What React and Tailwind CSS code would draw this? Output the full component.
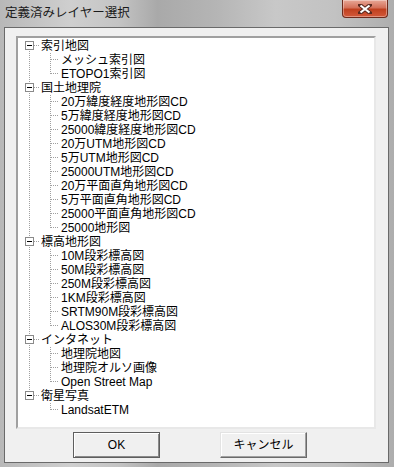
import React from "react";

const tree = [
  { label: "索引地図", children: ["メッシュ索引図", "ETOPO1索引図"] },
  {
    label: "国土地理院",
    children: [
      "20万緯度経度地形図CD",
      "5万緯度経度地形図CD",
      "25000緯度経度地形図CD",
      "20万UTM地形図CD",
      "5万UTM地形図CD",
      "25000UTM地形図CD",
      "20万平面直角地形図CD",
      "5万平面直角地形図CD",
      "25000平面直角地形図CD",
      "25000地形図",
    ],
  },
  {
    label: "標高地形図",
    children: [
      "10M段彩標高図",
      "50M段彩標高図",
      "250M段彩標高図",
      "1KM段彩標高図",
      "SRTM90M段彩標高図",
      "ALOS30M段彩標高図",
    ],
  },
  { label: "インタネット", children: ["地理院地図", "地理院オルソ画像", "Open Street Map"] },
  { label: "衛星写真", children: ["LandsatETM"] },
];

const dot = { stroke: "#a0a0a0", strokeWidth: 1, strokeDasharray: "1 1", shapeRendering: "crispEdges" };

// 親ノードの行（開閉ボックス付き）
function GroupRow({ label, first, last }) {
  return (
    <div className="flex h-[14px] items-center">
      <svg width="23" height="14" className="shrink-0">
        {!first && <line x1="11.5" y1="0" x2="11.5" y2="2" {...dot} />}
        {!last && <line x1="11.5" y1="12" x2="11.5" y2="14" {...dot} />}
        <line x1="16" y1="6.5" x2="22" y2="6.5" {...dot} />
        <rect x="7.5" y="2.5" width="8" height="8" fill="#fff" stroke="#8a8a8a" shapeRendering="crispEdges" />
        <line x1="9" y1="6.5" x2="14" y2="6.5" stroke="#000" shapeRendering="crispEdges" />
      </svg>
      <span className="whitespace-nowrap leading-[14px]">{label}</span>
    </div>
  );
}

// 子ノードの行
function LeafRow({ label, parentLast, last }) {
  return (
    <div className="flex h-[14px] items-center">
      <svg width="43" height="14" className="shrink-0">
        {!parentLast && <line x1="11.5" y1="0" x2="11.5" y2="14" {...dot} />}
        <line x1="32.5" y1="0" x2="32.5" y2={last ? 7 : 14} {...dot} />
        <line x1="33" y1="6.5" x2="41" y2="6.5" {...dot} />
      </svg>
      <span className="whitespace-nowrap leading-[14px]">{label}</span>
    </div>
  );
}

export default function App() {
  return (
    <div className="flex h-[467px] w-[394px] flex-col bg-[linear-gradient(90deg,#b8b8b8_0%,#cfcfcf_18%,#c4c4c4_30%,#a9a9a9_40%,#b5b5b5_55%,#c8c8c8_70%,#c2c2c2_85%,#adadad_100%)] font-['Liberation_Sans','Noto_Sans_CJK_JP',sans-serif] text-[12px] leading-[14px] text-black">
      {/* タイトルバー */}
      <div className="flex h-[27px] shrink-0 items-start justify-between">
        <div className="pl-[5px] pt-[6px] text-[12.5px] leading-[14px] text-[#1a1a1a]">定義済みレイヤー選択</div>
        <div className="mr-[6px] flex h-[18px] w-[46px] items-center justify-center rounded-b-[4px] border border-t-0 border-[#6e2a1c] bg-[linear-gradient(180deg,#e8a897_0%,#d4715a_45%,#c0401f_55%,#d3593a_100%)] shadow-[inset_0_0_0_1px_rgba(255,255,255,0.35)]">
          <svg width="14" height="10" viewBox="0 0 14 10">
            <path d="M2 1 L12 9 M12 1 L2 9" stroke="#5a2a20" strokeWidth="4" strokeLinecap="square" />
            <path d="M2.5 1.5 L11.5 8.5 M11.5 1.5 L2.5 8.5" stroke="#fff" strokeWidth="2.2" />
          </svg>
        </div>
      </div>

      {/* クライアント領域 */}
      <div className="mb-[4px] ml-[4px] mr-[5px] flex flex-1 flex-col border border-[#6a6a6a] bg-[#f0f0f0]">
        <div className="ml-[11px] mr-[12px] mt-[8px] h-[393px] border-2 border-b-[#e8e8e8] border-l-[#a0a0a0] border-r-[#e8e8e8] border-t-[#a0a0a0] bg-white pt-[1px]">
          {tree.map((g, gi) => {
            const last = gi === tree.length - 1;
            return (
              <div key={g.label}>
                <GroupRow label={g.label} first={gi === 0} last={last} />
                {g.children.map((c, ci) => (
                  <LeafRow key={c} label={c} parentLast={last} last={ci === g.children.length - 1} />
                ))}
              </div>
            );
          })}
        </div>

        <div className="ml-[68px] mt-[3px] flex gap-[60px]">
          <button className="flex h-[26px] w-[87px] items-center justify-center border border-[#5e5e5e] bg-[#f0f0f0] shadow-[inset_1px_1px_0_#ffffff,inset_-1px_-1px_0_#8a8a8a]">
            OK
          </button>
          <button className="flex h-[26px] w-[87px] items-center justify-center border border-b-[#6a6a6a] border-l-[#e3e3e3] border-r-[#6a6a6a] border-t-[#e3e3e3] bg-[#f0f0f0] shadow-[inset_-1px_-1px_0_#a0a0a0,inset_1px_1px_0_#ffffff]">
            キャンセル
          </button>
        </div>
      </div>
    </div>
  );
}
